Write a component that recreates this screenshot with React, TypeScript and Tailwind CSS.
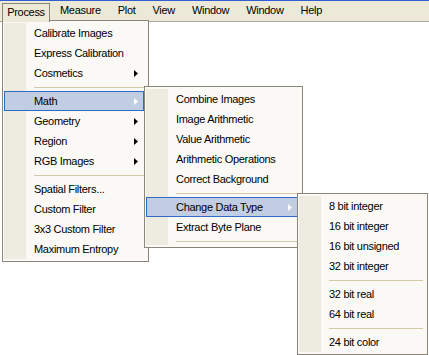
import React from "react";

type Item = { label?: string; sep?: boolean; arrow?: boolean; active?: boolean };

const mainItems: Item[] = [
  { label: "Calibrate Images" },
  { label: "Express Calibration" },
  { label: "Cosmetics", arrow: true },
  { sep: true },
  { label: "Math", arrow: true, active: true },
  { label: "Geometry", arrow: true },
  { label: "Region", arrow: true },
  { label: "RGB Images", arrow: true },
  { sep: true },
  { label: "Spatial Filters..." },
  { label: "Custom Filter" },
  { label: "3x3 Custom Filter" },
  { label: "Maximum Entropy" },
];

const mathItems: Item[] = [
  { label: "Combine Images" },
  { label: "Image Arithmetic" },
  { label: "Value Arithmetic" },
  { label: "Arithmetic Operations" },
  { label: "Correct Background" },
  { sep: true },
  { label: "Change Data Type", arrow: true, active: true },
  { label: "Extract Byte Plane" },
  { sep: true },
];

const typeItems: Item[] = [
  { label: "8 bit integer" },
  { label: "16 bit integer" },
  { label: "16 bit unsigned" },
  { label: "32 bit integer" },
  { sep: true },
  { label: "32 bit real" },
  { label: "64 bit real" },
  { sep: true },
  { label: "24 bit color" },
];

function Arrow({ light }: { light?: boolean }) {
  return (
    <svg width="4" height="7" viewBox="0 0 4 7" className="shrink-0">
      <path d="M0 0 L4 3.5 L0 7 Z" fill={light ? "#ffffff" : "#000000"} />
    </svg>
  );
}

function Menu({ items, className }: { items: Item[]; className: string }) {
  return (
    <div className={`absolute border border-[#8a867a] bg-[#faf9f5] py-[2px] pl-[1px] pr-[4px] ${className}`}>
      <div className="relative">
        <div className="absolute left-0 top-0 bottom-0 w-[22px] bg-[#eeebe0]" />
        {items.map((it, i) =>
          it.sep ? (
            <div key={i} className="relative h-[8px] flex items-center pl-[30px]">
              <div className="h-px w-full bg-[#d2c9a6]" />
            </div>
          ) : (
            <div
              key={i}
              className={`relative h-[20px] flex items-center pl-[30px] pr-[6px] ${
                it.active ? "bg-[#c1cde2] outline outline-1 outline-[#316ac5] -outline-offset-1" : ""
              }`}
            >
              <span className="flex-1 whitespace-nowrap">{it.label}</span>
              {it.arrow && <Arrow light={it.active} />}
            </div>
          )
        )}
      </div>
    </div>
  );
}

export default function App() {
  const bar = ["Measure", "Plot", "View", "Window", "Window", "Help"];
  return (
    <div
      className="relative w-[429px] h-[355px] bg-white overflow-hidden text-[11px] tracking-[-0.3px] text-black"
      style={{ fontFamily: '"Liberation Sans", Arial, sans-serif' }}
    >
      <div className="h-[22px] bg-[#ece9d8] border-t border-[#2f5fd0] border-b border-b-[#aca899] flex items-center pl-[52px]">
        <div className="flex h-full items-center gap-[17px] pl-[8px] pb-[1px]">
          {bar.map((b, i) => (
            <span key={i}>{b}</span>
          ))}
        </div>
      </div>
      <Menu items={mainItems} className="left-[2px] top-[20px] w-[147px]" />
      <Menu items={mathItems} className="left-[144px] top-[86px] w-[159px]" />
      <Menu items={typeItems} className="left-[297px] top-[193px] w-[131px]" />
      <div className="absolute z-10 left-[2px] top-[3px] h-[19px] w-[48px] border border-b-0 border-[#8a867a] bg-[#ece9d8] flex items-center justify-center pb-[2px]">
        Process
      </div>
    </div>
  );
}
